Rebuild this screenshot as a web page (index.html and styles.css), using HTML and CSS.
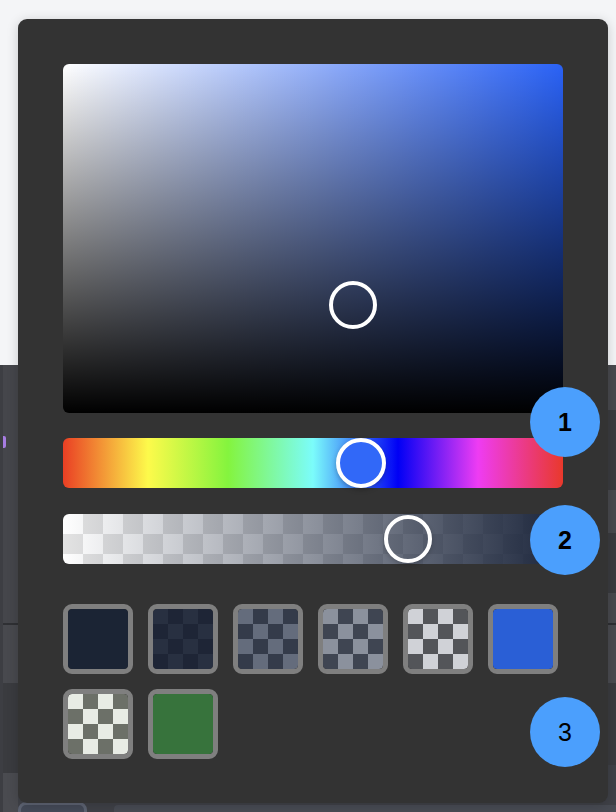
FILE: index.html
```html
<!DOCTYPE html>
<html>
<head>
<meta charset="utf-8">
<link rel="stylesheet" href="styles.css">
</head>
<body>
<div class="page">
  <div class="page-top"></div>
  <div class="page-table">
    <div class="side">
      <div class="side-a"><span class="mark"></span></div>
      <div class="side-line"></div>
      <div class="side-b"></div>
      <div class="side-c"></div>
      <div class="side-d"></div>
    </div>
    <div class="rows">
      <div class="row r1"></div>
      <div class="row r2"></div>
      <div class="row r3"></div>
      <div class="row r4"></div>
      <div class="row r5"></div>
      <div class="row-line"></div>
      <div class="row r6"></div>
      <div class="row r7"></div>
      <div class="row r8">
        <div class="chip"></div>
        <div class="bar"></div>
      </div>
    </div>
  </div>
</div>

<div class="popup">
  <div class="sv">
    <div class="pointer sv-pointer"></div>
  </div>
  <div class="hue">
    <div class="pointer hue-pointer"></div>
  </div>
  <div class="alpha">
    <div class="alpha-fill"></div>
    <div class="pointer alpha-pointer"></div>
  </div>
  <div class="swatches">
    <div class="swatch"><div class="sw-in s1"></div></div>
    <div class="swatch"><div class="sw-in s2"></div></div>
    <div class="swatch"><div class="sw-in s3"></div></div>
    <div class="swatch"><div class="sw-in s4"></div></div>
    <div class="swatch"><div class="sw-in s5"></div></div>
    <div class="swatch"><div class="sw-in s6"></div></div>
    <div class="swatch"><div class="sw-in s7"></div></div>
    <div class="swatch"><div class="sw-in s8"></div></div>
  </div>
  <div class="badge b1">1</div>
  <div class="badge b2">2</div>
  <div class="badge b3">3</div>
</div>
</body>
</html>
```
FILE: styles.css
```css
html, body {
  margin: 0;
  padding: 0;
}
body {
  width: 616px;
  height: 812px;
  overflow: hidden;
  position: relative;
  font-family: "Liberation Sans", Arial, sans-serif;
  background: #3f4147;
}
.page {
  display: flex;
  flex-direction: column;
  height: 812px;
}
.page-top {
  height: 365px;
  background: #f4f5f7;
  flex: none;
}
.page-table {
  flex: 1;
  display: grid;
  grid-template-columns: 18px 1fr;
}
.side {
  display: flex;
  flex-direction: column;
  border-left: 3px solid #3d3e43;
}
.side-a {
  height: 258px;
  background: #45464b;
  position: relative;
}
.mark {
  position: absolute;
  left: 0;
  top: 71px;
  width: 3px;
  height: 12px;
  border-radius: 0 2px 2px 0;
  background: #a77de2;
}
.side-line { height: 2px; background: #2f3034; }
.side-b { height: 58px; background: #48494e; }
.side-c { height: 90px; background: #3a3b3f; }
.side-d { flex: 1; background: #4a4b50; }

.rows {
  display: flex;
  flex-direction: column;
}
.row { flex: none; }
.r1 { height: 45px; background: #48494e; }
.r2 { height: 80px; background: #3a3b3f; }
.r3 { height: 43px; background: #48494e; }
.r4 { height: 60px; background: #3a3b3f; }
.r5 { height: 30px; background: #48494e; }
.row-line { height: 2px; background: #2e2f33; }
.r6 { height: 58px; background: #4a4b50; }
.r7 { height: 82px; background: #3a3b3f; }
.r8 {
  flex: 1;
  background: #3f4147;
  display: flex;
  align-items: flex-start;
  padding-top: 37px;
}
.chip {
  width: 69px;
  height: 20px;
  border-radius: 8px 8px 0 0;
  border: 3px solid #5d6372;
  background: #444a58;
  box-sizing: border-box;
}
.bar {
  margin-left: 27px;
  flex: 1;
  height: 20px;
  margin-top: 3px;
  background: #484b53;
  border-radius: 4px 0 0 0;
}

.popup {
  position: absolute;
  left: 18px;
  top: 19px;
  width: 590px;
  height: 784px;
  box-sizing: border-box;
  padding: 45px 45px 0 45px;
  background: #333333;
  border-radius: 9px;
  box-shadow: 0 2px 12px rgba(0, 0, 0, 0.18);
  display: flex;
  flex-direction: column;
}
.sv {
  position: relative;
  height: 349px;
  border-radius: 6px;
  background-color: #2a62f6;
  background-image:
    linear-gradient(to top, #000, rgba(0, 0, 0, 0)),
    linear-gradient(to right, #fff, rgba(255, 255, 255, 0));
}
.pointer {
  position: absolute;
  box-sizing: border-box;
  border-radius: 50%;
  border: 4px solid #fff;
  transform: translate(-50%, -50%);
}
.sv-pointer {
  width: 48px;
  height: 48px;
  left: 58%;
  top: 69%;
  background: transparent;
}
.hue {
  position: relative;
  margin-top: 25px;
  height: 50px;
  border-radius: 6px;
  background: linear-gradient(to right,
    #ea3f24 0%, #fdfa4b 17%, #84f43e 33%, #7bfcfb 50%,
    #0000f5 67%, #ee3cf3 83%, #e9392b 100%);
}
.hue-pointer {
  width: 50px;
  height: 50px;
  left: 59.6%;
  top: 50%;
  background: #3168f8;
  box-shadow: 0 2px 5px rgba(0, 0, 0, 0.25);
}
.alpha {
  position: relative;
  margin-top: 26px;
  height: 50px;
  border-radius: 6px;
  background: repeating-conic-gradient(#e3e3e3 0 25%, #ffffff 0 50%) 0 0 / 40px 40px;
}
.alpha-fill {
  height: 100%;
  border-radius: 6px;
  background: linear-gradient(to right, rgba(28, 38, 60, 0), rgba(28, 38, 60, 1));
}
.alpha-pointer {
  width: 48px;
  height: 48px;
  left: 69%;
  top: 50%;
  background: transparent;
  box-shadow: 0 2px 5px rgba(0, 0, 0, 0.2);
}
.swatches {
  margin-top: 40px;
  display: grid;
  grid-template-columns: repeat(6, 70px);
  column-gap: 15px;
  row-gap: 15px;
}
.swatch {
  width: 70px;
  height: 70px;
  box-sizing: border-box;
  border: 5px solid #7f7f7f;
  border-radius: 9px;
  overflow: hidden;
}
.sw-in {
  width: 100%;
  height: 100%;
  border-radius: 4px;
}
.s1 { background: #1b2434; }
.s2 { background: repeating-conic-gradient(#1e2536 0 25%, #283041 0 50%) 0 0 / 30px 30px; }
.s3 { background: repeating-conic-gradient(#343b4a 0 25%, #646c7c 0 50%) 0 0 / 30px 30px; }
.s4 { background: repeating-conic-gradient(#3f4552 0 25%, #8b919d 0 50%) 0 0 / 30px 30px; }
.s5 { background: repeating-conic-gradient(#535559 0 25%, #d0d2d7 0 50%) 0 0 / 30px 30px; }
.s6 { background: #2a5fd6; }
.s7 { background: repeating-conic-gradient(#6c7068 0 25%, #e8ece5 0 50%) 0 0 / 30px 30px; }
.s8 { background: #37733c; }

.badge {
  position: absolute;
  left: 512px;
  width: 70px;
  height: 70px;
  border-radius: 50%;
  background: #4b9ffd;
  color: #000;
  font-size: 25px;
  font-weight: 600;
  display: flex;
  align-items: center;
  justify-content: center;
}
.b1 { top: 368px; }
.b2 { top: 486px; }
.b3 { top: 678px; font-weight: 400; }
```
